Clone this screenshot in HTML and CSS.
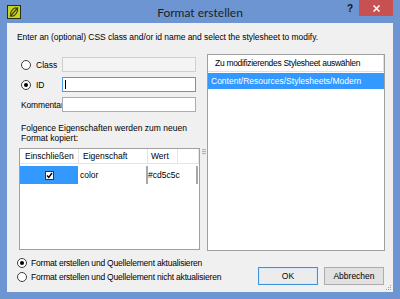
FILE: index.html
```html
<!DOCTYPE html>
<html lang="de">
<head>
<meta charset="utf-8">
<title>Format erstellen</title>
<link rel="stylesheet" href="styles.css">
</head>
<body>
<div class="window">
  <div class="titlebar">
    <div class="appicon">
      <svg width="14" height="14" viewBox="0 0 14 14">
        <rect x="0.5" y="0.5" width="13" height="13" fill="#c9d41c" stroke="#2d2f12"/>
        <ellipse cx="7" cy="7" rx="2.6" ry="4.6" transform="rotate(35 7 7)" fill="none" stroke="#3a3c14" stroke-width="1.2"/>
        <line x1="3" y1="11.5" x2="11" y2="2.5" stroke="#3a3c14" stroke-width="1.2"/>
      </svg>
    </div>
    <div class="title">Format erstellen</div>
    <div class="controls">
      <span class="help">?</span>
      <span class="close">
        <svg width="7" height="7" viewBox="0 0 7 7"><path d="M0.5 0.5 L6.5 6.5 M6.5 0.5 L0.5 6.5" stroke="#fff" stroke-width="1.5"/></svg>
      </span>
    </div>
  </div>
  <div class="client">
    <p class="intro">Enter an (optional) CSS class and/or id name and select the stylesheet to modify.</p>
    <div class="main">
      <div class="leftcol">
        <div class="frow first">
          <span class="radio"></span><span class="rlabel">Class</span>
          <span class="field disabled"></span>
        </div>
        <div class="frow">
          <span class="radio checked"></span><span class="rlabel">ID</span>
          <span class="field focus"><span class="caret"></span></span>
        </div>
        <div class="frow">
          <span class="klabel">Kommentar</span>
          <span class="field"></span>
        </div>
        <p class="note">Folgence Eigenschaften werden zum neuen<br>Format kopiert:</p>
        <div class="grid">
          <div class="ghead">
            <span class="hc c1">Einschließen</span>
            <span class="hc c2">Eigenschaft</span>
            <span class="hc c3">Wert</span>
            <span class="hc fill"></span>
          </div>
          <div class="grow">
            <span class="gc c1 sel">
              <span class="check">
                <svg width="7" height="7" viewBox="0 0 7 7"><path d="M1 3.5 L2.8 5.5 L6 1" fill="none" stroke="#000" stroke-width="1.4"/></svg>
              </span>
            </span>
            <span class="gc c2">color</span>
            <span class="gc edit">#cd5c5c</span>
          </div>
        </div>
      </div>
      <div class="splitter"><span class="grip"></span></div>
      <div class="sheetlist">
        <div class="lhead">Zu modifizierendes Stylesheet auswählen</div>
        <div class="lrow sel">Content/Resources/Stylesheets/Modern</div>
      </div>
    </div>
    <div class="footer">
      <div class="options">
        <div class="opt"><span class="radio checked"></span><span class="olabel">Format erstellen und Quellelement aktualisieren</span></div>
        <div class="opt"><span class="radio"></span><span class="olabel">Format erstellen und Quellelement nicht aktualisieren</span></div>
      </div>
      <div class="buttons">
        <span class="btn default">OK</span>
        <span class="btn">Abbrechen</span>
      </div>
    </div>
    <span class="sizegrip">
      <svg width="6" height="6" viewBox="0 0 6 6" fill="#a0a0a0">
        <rect x="4" y="0" width="1" height="1"/>
        <rect x="2" y="2" width="1" height="1"/><rect x="4" y="2" width="1" height="1"/>
        <rect x="0" y="4" width="1" height="1"/><rect x="2" y="4" width="1" height="1"/><rect x="4" y="4" width="1" height="1"/>
      </svg>
    </span>
  </div>
</div>
</body>
</html>
```

FILE: styles.css
```css
* { box-sizing: border-box; }
html, body { margin: 0; padding: 0; }
body {
  width: 400px;
  height: 299px;
  overflow: hidden;
  font-family: "Liberation Sans", Arial, sans-serif;
  font-size: 8.5px;
  color: #000;
}
.window {
  width: 400px;
  height: 299px;
  background: #6d95d2;
  display: flex;
  flex-direction: column;
}
.titlebar {
  height: 23px;
  flex: none;
  display: grid;
  grid-template-columns: 1fr auto 1fr;
  align-items: start;
}
.appicon { padding: 5px 0 0 7px; line-height: 0; }
.title {
  font-family: Lato, "Open Sans", sans-serif;
  font-size: 12px;
  line-height: 14px;
  padding-top: 6px;
  color: #1e1e1e;
  white-space: nowrap;
}
.controls { justify-self: end; display: flex; align-items: flex-start; }
.help {
  font-family: "Liberation Sans", sans-serif;
  font-weight: bold;
  font-size: 10px;
  line-height: 10px;
  margin-top: 4px;
  margin-right: 6px;
  color: #111;
}
.close {
  width: 34px;
  height: 16px;
  margin-right: 7px;
  background: #c75050;
  display: flex;
  align-items: center;
  justify-content: center;
}
.client {
  flex: 1;
  margin: 0 7px 8px 7px;
  background: #f0f0f0;
  display: flex;
  flex-direction: column;
  padding: 9px 8px 7px 10px;
  position: relative;
}
.intro { margin: 0; line-height: 11px; white-space: nowrap; letter-spacing: -0.05px; }
.main { display: flex; margin-top: 11px; height: 197px; flex: none; }
.leftcol { width: 181px; margin-left: 2px; display: flex; flex-direction: column; }
.frow { display: flex; align-items: center; height: 15px; margin-top: 5px; flex: none; }
.frow.first { margin-top: 3px; }
.radio {
  width: 10px;
  height: 10px;
  border-radius: 50%;
  border: 1px solid #3f3f3f;
  background: #fff;
  display: inline-flex;
  align-items: center;
  justify-content: center;
  flex: none;
}
.frow .radio { margin-left: 2px; }
.radio.checked::after {
  content: "";
  width: 4px;
  height: 4px;
  border-radius: 50%;
  background: #000;
}
.rlabel { margin-left: 5px; }
.klabel { width: 41px; margin-left: 2px; overflow: hidden; white-space: nowrap; flex: none; letter-spacing: -0.15px; }
.field {
  margin-left: auto;
  margin-right: 4px;
  width: 134px;
  height: 15px;
  background: #fff;
  border: 1px solid #abadb3;
  display: flex;
  align-items: center;
  flex: none;
}
.field.disabled { background: #f4f4f4; border-color: #cfcfcf; }
.field.focus { border-color: #4f9be6; }
.caret { width: 1px; height: 9px; background: #000; margin-left: 2px; }
.note { margin: 11px 0 0 2px; line-height: 10px; white-space: nowrap; }
.grid {
  margin-top: 5px;
  margin-bottom: 1px;
  flex: 1;
  border: 1px solid #a0a0a0;
  background: #fff;
  display: flex;
  flex-direction: column;
}
.ghead { display: flex; height: 15px; flex: none; }
.hc {
  border-right: 1px solid #e5e5e5;
  border-bottom: 1px solid #e5e5e5;
  display: flex;
  align-items: center;
  white-space: nowrap;
}
.hc.c1 { width: 59px; padding-left: 5px; }
.hc.c2 { width: 69px; padding-left: 4px; }
.hc.c3 { width: 30px; padding-left: 3px; }
.hc.fill { flex: 1; }
.grow { display: flex; height: 18px; margin-top: 2px; }
.gc { display: flex; align-items: center; white-space: nowrap; }
.gc.c1 { width: 58px; justify-content: center; }
.gc.sel { background: #3399ff; }
.gc.c2 { width: 68px; padding-left: 2px; }
.gc.edit {
  flex: 1;
  border-left: 2px solid #a8a8a8;
  border-right: 2px solid #a8a8a8;
  margin-right: 1px;
}
.check {
  width: 9px;
  height: 9px;
  border: 1px solid #333;
  background: #fff;
  display: flex;
  align-items: center;
  justify-content: center;
}
.splitter { width: 7px; display: flex; justify-content: center; padding-top: 95px; }
.grip {
  width: 4px;
  height: 6px;
  background: repeating-linear-gradient(to bottom, #b4b4b4 0 1px, #e8e8e8 1px 2px);
}
.sheetlist {
  width: 178px;
  border: 1px solid #a0a0a0;
  background: #fff;
  display: flex;
  flex-direction: column;
}
.lhead {
  height: 17px;
  padding-left: 7px;
  border-bottom: 1px solid #e0e0e0;
  border-right: 1px solid #e0e0e0;
  display: flex;
  align-items: center;
  white-space: nowrap;
  letter-spacing: -0.3px;
}
.lrow { height: 16px; margin-top: 1px; padding-left: 3px; display: flex; align-items: center; white-space: nowrap; }
.lrow.sel { background: #3399ff; color: #fff; }
.footer { display: flex; flex: none; }
.options { display: flex; flex-direction: column; margin-top: 5px; }
.opt { display: flex; align-items: center; height: 14px; }
.olabel { margin-left: 4px; white-space: nowrap; letter-spacing: -0.2px; }
.buttons { margin-left: auto; margin-right: 1px; margin-top: 16px; display: flex; gap: 6px; align-self: flex-start; }
.btn {
  width: 60px;
  height: 18px;
  border: 1px solid #adadad;
  background: #e1e1e1;
  display: flex;
  align-items: center;
  justify-content: center;
}
.btn.default { border-color: #3c93e0; background: #ececec; box-shadow: inset 0 0 0 1px #d4e8fa; }
.sizegrip { position: absolute; right: 1px; bottom: 1px; line-height: 0; }
```
